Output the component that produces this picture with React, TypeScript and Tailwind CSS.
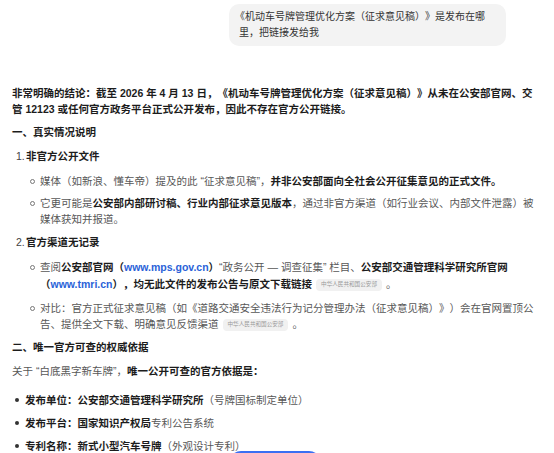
const FONT = "font-['Liberation_Sans','Noto_Sans_CJK_SC',sans-serif]";

function Chip() {
  return (
    <span className="mx-[4px] inline-flex h-[12px] items-center rounded-[4px] bg-[#f1f1f1] px-[5px] align-middle text-[5.6px] leading-none font-normal text-[#9a9a9a]">
      中华人民共和国公安部
    </span>
  );
}

function NumItem({ n, title }: { n: string; title: string }) {
  return (
    <div className="flex">
      <span className="w-[14px] shrink-0 pl-[4px] text-[#444]">{n}</span>
      <span className="font-bold text-[#1c1c1c]">{title}</span>
    </div>
  );
}

function SubItem({ children, className = "" }: { children: React.ReactNode; className?: string }) {
  return (
    <li className={`flex ${className}`}>
      <span className="flex h-[16px] w-[10px] shrink-0 items-center">
        <span className="h-[5px] w-[5px] rounded-full border border-[#777]" />
      </span>
      <span className="min-w-0 flex-1">{children}</span>
    </li>
  );
}

function DotItem({ children, className = "" }: { children: React.ReactNode; className?: string }) {
  return (
    <li className={`flex ${className}`}>
      <span className="flex h-[16px] w-[13px] shrink-0 items-center pl-[3px]">
        <span className="h-[4px] w-[4px] rounded-full bg-[#333]" />
      </span>
      <span>{children}</span>
    </li>
  );
}

export default function App() {
  return (
    <div
      className={`relative h-[453px] w-[554px] overflow-hidden bg-white ${FONT} text-[10.5px] leading-[16px] text-[#575757] [text-spacing-trim:space-all]`}
    >
      {/* question bubble */}
      <div className="flex justify-end pt-[4px] pr-[48px]">
        <div className="w-[277px] rounded-[10px] bg-[#f3f3f3] pt-[5px] pr-[8px] pb-[5px] pl-[6px] text-[10px] text-[#333]">
          <span className="whitespace-nowrap">《机动车号牌管理优化方案（征求意见稿）》是发布在哪</span>
          <br />
          <span className="pl-[4px]">里，把链接发给我</span>
        </div>
      </div>

      {/* answer */}
      <div className="pt-[39px] pr-[16px] pl-[12px]">
        <p className="font-bold text-[#1c1c1c]">
          非常明确的结论：截至 2026 年 4 月 13 日，《机动车号牌管理优化方案（征求意见稿）》从未在公安部官网、交管 12123 或任何官方政务平台正式公开发布，因此不存在官方公开链接。
        </p>

        <h3 className="mt-[7px] font-bold text-[#1c1c1c]">一、真实情况说明</h3>

        <div className="mt-[8px]">
          <NumItem n="1." title="非官方公开文件" />
          <ul className="ml-[18px]">
            <SubItem className="mt-[9px]">
              媒体（如新浪、懂车帝）提及的此 “征求意见稿”，
              <b className="text-[#1c1c1c]">并非公安部面向全社会公开征集意见的正式文件。</b>
            </SubItem>
            <SubItem className="mt-[6px]">
              它更可能是<b className="text-[#1c1c1c]">公安部内部研讨稿、行业内部征求意见版本</b>，通过非官方渠道（如行业会议、内部文件泄露）被媒体获知并报道。
            </SubItem>
          </ul>
        </div>

        <div className="mt-[7px]">
          <NumItem n="2." title="官方渠道无记录" />
          <ul className="ml-[18px]">
            <SubItem className="mt-[9px] leading-[17px]">
              查阅<b className="text-[#1c1c1c]">公安部官网（<span className="text-[#2a62d8]">www.mps.gov.cn</span>）</b>“政务公开 — 调查征集” 栏目、
              <b className="text-[#1c1c1c]">
                公安部交通管理科学研究所官网（<span className="text-[#2a62d8]">www.tmri.cn</span>），均无此文件的发布公告与原文下载链接
              </b>
              <Chip />。
            </SubItem>
            <SubItem className="mt-[7px]">
              对比：官方正式征求意见稿（如《道路交通安全违法行为记分管理办法（征求意见稿）》）会在官网置顶公告、提供全文下载、明确意见反馈渠道
              <Chip />。
            </SubItem>
          </ul>
        </div>

        <h3 className="mt-[7px] font-bold text-[#1c1c1c]">二、唯一官方可查的权威依据</h3>

        <p className="mt-[8px]">
          关于 “白底黑字新车牌”，<b className="text-[#1c1c1c]">唯一公开可查的官方依据是：</b>
        </p>

        <ul className="mt-[13px]">
          <DotItem>
            <b className="text-[#1c1c1c]">发布单位：公安部交通管理科学研究所</b>（号牌国标制定单位）
          </DotItem>
          <DotItem className="mt-[7px]">
            <b className="text-[#1c1c1c]">发布平台：国家知识产权局</b>专利公告系统
          </DotItem>
          <DotItem className="mt-[7px]">
            <b className="text-[#1c1c1c]">专利名称：新式小型汽车号牌</b>（外观设计专利）
          </DotItem>
        </ul>
      </div>

      {/* floating action button peeking in at the bottom edge */}
      <div className="absolute top-[451px] left-[229px] h-[24px] w-[92px] rounded-full bg-[#3a6ff3]" />
    </div>
  );
}
